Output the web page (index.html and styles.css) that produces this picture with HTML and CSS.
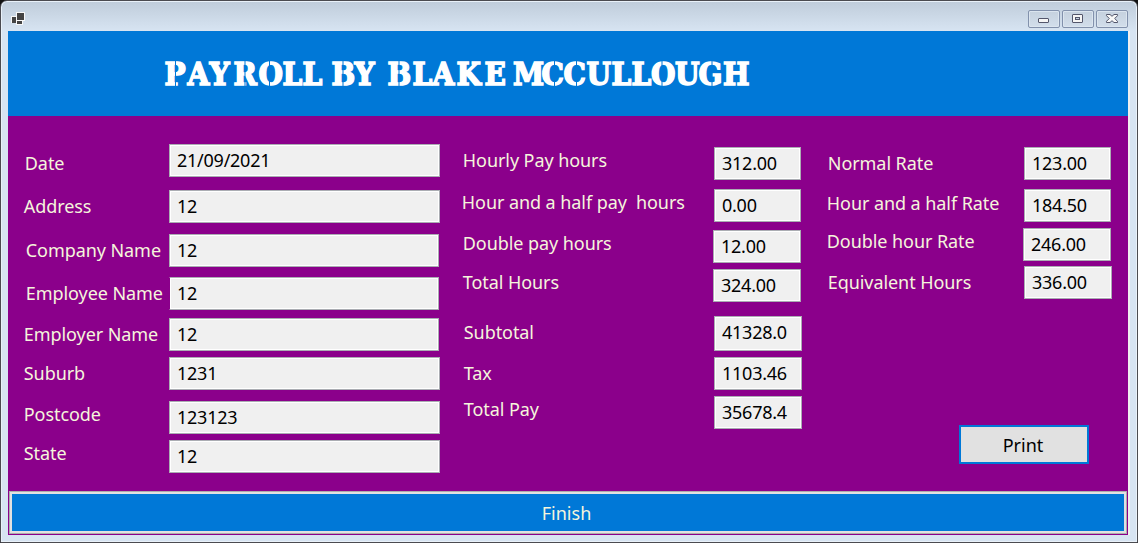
FILE: index.html
```html
<!DOCTYPE html>
<html lang="en">
<head>
<meta charset="utf-8">
<title>Payroll</title>
<link rel="stylesheet" href="styles.css">
</head>
<body>
<div class="window">
  <div class="titlebar">
    <svg class="app-icon" width="14" height="13" viewBox="0 0 14 13" shape-rendering="crispEdges">
      <path fill="#f8f8f8" d="M0 4h5V0h9v9h-2v4H5v-2H0z"/>
      <path fill="#444" d="M1 5h4v6H1zM6 1h7v7H6zM6 9h5v3H6z"/>
      <path fill="#f8f8f8" d="M5 4h1v9H5z"/>
    </svg>
    <div class="controls">
      <div class="control"><svg width="30" height="16" viewBox="0 0 30 16"><rect x="9.5" y="7.500" width="10" height="4" rx=".5" fill="#f5f5f5" stroke="#53566b"/></svg></div>
      <div class="control"><svg width="30" height="16" viewBox="0 0 30 16"><rect x="9.5" y="3.500" width="10" height="8" rx=".5" fill="#f5f5f5" stroke="#53566b"/><rect x="12.500" y="6.500" width="4" height="2" fill="#c5d1df" stroke="#53566b"/></svg></div>
      <div class="control"><svg width="30" height="16" viewBox="0 0 30 16"><path d="M9.500 3.500H13l2 1.800 2-1.800h3.500v1.200L17.700 7.500l2.800 2.800v1.200H17l-2-1.800-2 1.800H9.500v-1.200l2.800-2.800-2.800-2.800z" fill="#f8f8f8" stroke="#53566b"/></svg></div>
    </div>
  </div>
  <div class="form">
    <div class="banner">
      <svg width="1120" height="85" viewBox="8 31 1120 85">
        <g transform="scale(.96 1)">
          <text class="heading" y="85.300" x="171.4 195.3 218.2 243.2 269.3 294.3 315.1 335 345.3 369.3 395 403.6 429.7 450.5 475.5 504.7 525 534.4 564.1 587 610.9 637 657.8 678.1 703.1 727.6 753.1">PAYROLL BY BLAKE MCCULLOUGH</text>
        </g>
        <path class="gaps" d="M175.500 60v27M245 60v27M269.500 60v27M343 60v27M399 60v27M554.500 60v27M576.500 60v27M662 60v27M712 60v27"/>
      </svg>
    </div>
    <div class="fields">
      <div class="column details">
        <div class="row first"><span class="label low in1">Date</span><span class="box">21/09/2021</span></div>
        <div class="row gap13"><span class="label">Address</span><span class="box">12</span></div>
        <div class="row gap11"><span class="label in2">Company Name</span><span class="box short">12</span></div>
        <div class="row gap10"><span class="label in2">Employee Name</span><span class="box short open-left">12</span></div>
        <div class="row gap8"><span class="label">Employer Name</span><span class="box short">12</span></div>
        <div class="row gap6"><span class="label">Suburb</span><span class="box">1231</span></div>
        <div class="row gap11"><span class="label high">Postcode</span><span class="box">123123</span></div>
        <div class="row gap6"><span class="label high">State</span><span class="box">12</span></div>
      </div>
      <div class="column hours">
        <div class="row top"><span class="label high in1">Hourly Pay hours</span><span class="box">312.00</span></div>
        <div class="row gap9"><span class="label high">Hour and a half pay&nbsp; hours</span><span class="box">0.00</span></div>
        <div class="row gap8"><span class="label high in1">Double pay hours</span><span class="box wide-left">12.00</span></div>
        <div class="row gap6"><span class="label high in1">Total Hours</span><span class="box wide-left">324.00</span></div>
        <div class="row gap14 tall"><span class="label in2">Subtotal</span><span class="box wide">41328.0</span></div>
        <div class="row gap6"><span class="label in2">Tax</span><span class="box wide">1103.46</span></div>
        <div class="row gap6"><span class="label high in2">Total Pay</span><span class="box wide">35678.4</span></div>
      </div>
      <div class="column rates">
        <div class="row top"><span class="label in1">Normal Rate</span><span class="box">123.00</span></div>
        <div class="row gap9"><span class="label raised">Hour and a half Rate</span><span class="box">184.50</span></div>
        <div class="row gap6"><span class="label high">Double hour Rate</span><span class="box wide-left">246.00</span></div>
        <div class="row gap5"><span class="label in1">Equivalent Hours</span><span class="box wide">336.00</span></div>
        <button class="print">Print</button>
      </div>
    </div>
    <button class="finish">Finish</button>
  </div>
</div>
</body>
</html>
```
FILE: styles.css
```css
* { box-sizing: border-box; }
body {
  margin: 0;
  background: #111;
  font-family: "Noto Sans", "Open Sans", sans-serif;
  font-size: 18px;
  letter-spacing: -0.25px;
}
.window {
  width: 1138px;
  height: 543px;
  padding: 0 6px 0;
  border: 1px solid #4b4b50;
  border-radius: 7px 7px 0 0;
  background: linear-gradient(#bfccda, #d7e4f2 30px);
  box-shadow: inset 0 0 0 1px #e9f1f9;
}
.titlebar {
  display: flex;
  justify-content: space-between;
  height: 30px;
  padding: 9px 3px 0 4px;
}
.app-icon { margin-top: 2px; }
.controls { display: flex; gap: 2px; }
.control {
  width: 32px;
  height: 18px;
  border: 1px solid #8291ac;
  border-radius: 2px;
  background: linear-gradient(#c5d1de, #d2deeb);
  box-shadow: inset 0 0 0 1px #dbe5ef;
}
.control svg { display: block; }
.form {
  width: 1122px;
  height: 504px;
  margin-left: 1px;
  border-right: 2px solid #f0f0f0;
  background: #8b008b;
}
.banner { height: 85px; background: #0078d7; }
.banner svg { display: block; }
.heading {
  fill: #fff;
  stroke: #fff;
  stroke-width: 1.5px;
  font: bold 32.5px "DejaVu Serif Condensed", "DejaVu Serif", serif;
  font-stretch: condensed;
  letter-spacing: 0;
}
.gaps { stroke: #0078d7; stroke-width: 1px; fill: none; }
.fields { display: flex; height: 375px; padding-left: 15px; }
.column { display: flex; flex-direction: column; }
.details { width: 438px; }
.hours { width: 365px; }
.rates { width: 286px; }
.row { display: flex; height: 33px; line-height: 31px; }
.tall { height: 35px; }
.first { margin-top: 28px; }
.top { margin-top: 31px; }
.gap5 { margin-top: 5px; }
.gap6 { margin-top: 6px; }
.gap8 { margin-top: 8px; }
.gap9 { margin-top: 9px; }
.gap10 { margin-top: 10px; }
.gap11 { margin-top: 11px; }
.gap13 { margin-top: 13px; }
.gap14 { margin-top: 14px; }
.label {
  flex: none;
  margin-top: 1px;
  color: #f5f5dc;
  letter-spacing: -0.07px;
  text-indent: 0.8px;
  white-space: pre;
}
.details .label { width: 146px; }
.hours .label { width: 253px; }
.rates .label { width: 198px; }
.in1 { padding-left: 1px; }
.in2 { padding-left: 2px; }
.low { margin-top: 4px; }
.high { margin-top: -2px; }
.raised { margin-top: -1px; }
.box {
  flex: none;
  width: 87px;
  padding-left: 7px;
  border: 1px solid #abadb3;
  box-shadow: inset 0 0 0 1px #fff;
  background: #f0f0f0;
  color: #000;
}
.details .box { width: 271px; }
.details .short { width: 270px; }
.open-left { border-left-color: #8b008b; }
.wide { width: 88px; }
.wide-left { width: 88px; margin-left: -1px; }
button { padding: 0; font: inherit; letter-spacing: 0; }
.print {
  width: 130px;
  height: 39px;
  margin: 126px 0 0 133px;
  padding-right: 2px;
  border: 2px solid #0078d7;
  background: #e1e1e1;
  color: #000;
}
.finish {
  display: block;
  width: 1118px;
  height: 43px;
  margin-left: 1px;
  padding-right: 3px;
  border: 1px solid #adadad;
  box-shadow: inset 0 0 0 2px #e1e1e1;
  background: #0078d7;
  color: #f5f5dc;
}
```
